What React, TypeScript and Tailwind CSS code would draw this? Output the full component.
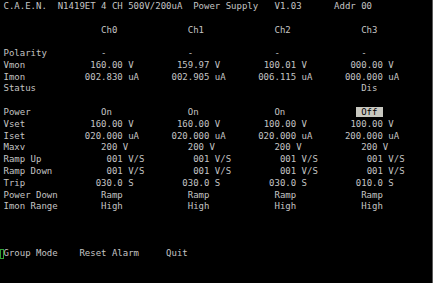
import React from 'react';

type Seg = { col: number; text: string; hl?: boolean };

const CH_COLS = [15, 31, 47, 63];

// build a channel row: label at col 0, one value per channel at base+offset
const chRow = (label: string, values: string[], off: number, hlIndex = -1): Seg[] => [
  { col: 0, text: label },
  ...values.map((v, i) =>
    i === hlIndex
      ? { col: CH_COLS[i] + off - 1, text: ` ${v} `, hl: true }
      : { col: CH_COLS[i] + off, text: v }
  ),
];

const header: Seg[] = [
  { col: 0, text: 'C.A.E.N.' },
  { col: 10, text: 'N1419ET 4 CH 500V/200uA' },
  { col: 35, text: 'Power Supply' },
  { col: 50, text: 'V1.03' },
  { col: 61, text: 'Addr 00' },
];

const rows: Seg[][] = [
  header,
  [],
  chRow('', ['Ch0', 'Ch1', 'Ch2', 'Ch3'], 3),
  [],
  chRow('Polarity', ['-', '-', '-', '-'], 3),
  chRow('Vmon', ['160.00 V', '159.97 V', '100.01 V', '000.00 V'], 1),
  chRow('Imon', ['002.830 uA', '002.905 uA', '006.115 uA', '000.000 uA'], 0),
  [{ col: 0, text: 'Status' }, { col: 66, text: 'Dis' }],
  [],
  chRow('Power', ['On', 'On', 'On', 'Off'], 3, 3),
  chRow('Vset', ['160.00 V', '160.00 V', '100.00 V', '100.00 V'], 1),
  chRow('Iset', ['020.000 uA', '020.000 uA', '020.000 uA', '200.000 uA'], 0),
  chRow('Maxv', ['200 V', '200 V', '200 V', '200 V'], 3),
  chRow('Ramp Up', ['001 V/S', '001 V/S', '001 V/S', '001 V/S'], 4),
  chRow('Ramp Down', ['001 V/S', '001 V/S', '001 V/S', '001 V/S'], 4),
  chRow('Trip', ['030.0 S', '030.0 S', '030.0 S', '010.0 S'], 2),
  chRow('Power Down', ['Ramp', 'Ramp', 'Ramp', 'Ramp'], 3),
  chRow('Imon Range', ['High', 'High', 'High', 'High'], 3),
  [],
  [],
  [],
  [
    { col: 0, text: 'Group Mode' },
    { col: 14, text: 'Reset Alarm' },
    { col: 30, text: 'Quit' },
  ],
];

const Line = ({ segs }: { segs: Seg[] }) => {
  let pos = 0;
  const out: React.ReactNode[] = [];
  segs.forEach((s, i) => {
    if (!s.text) return;
    const pad = Math.max(0, s.col - pos);
    if (pad) out.push(' '.repeat(pad));
    out.push(
      s.hl ? (
        <span key={i} className="bg-[#c8c8c0] text-black">
          {s.text}
        </span>
      ) : (
        s.text
      )
    );
    pos = s.col + s.text.length;
  });
  return <div className="h-[11.79px] whitespace-pre">{out.length ? out : ' '}</div>;
};

export default function App() {
  return (
    <div className="relative w-[433px] h-[283px] overflow-hidden bg-black border-r border-[#5a5a5a] pl-[3.5px] pt-[1px] font-['DejaVu_Sans_Mono',monospace] text-[9px] leading-[11.79px] text-[#c4c4c4]">
      {rows.map((r, i) => (
        <Line key={i} segs={r} />
      ))}
      {/* cursor */}
      <div className="absolute left-0 top-[249px] w-[4px] h-[10px] border border-[#34a034]" />
    </div>
  );
}
